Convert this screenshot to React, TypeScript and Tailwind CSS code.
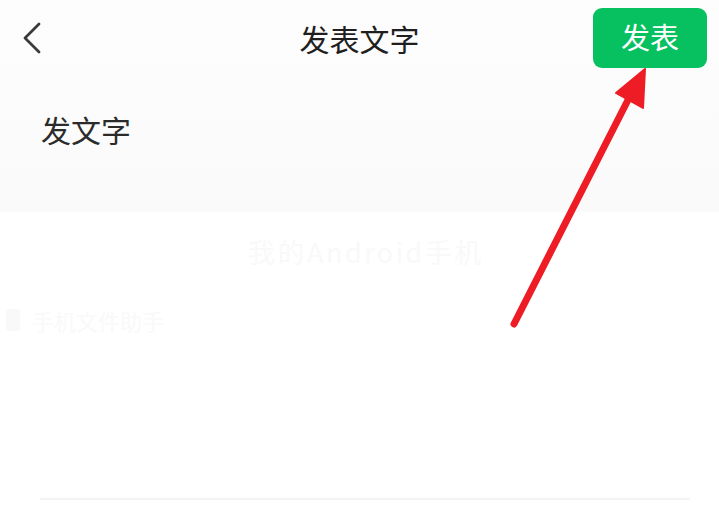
const FONT = { fontFamily: '"Noto Sans CJK SC", "Noto Sans", sans-serif' };

const App: React.FC = () => {
  return (
    <div className="relative w-[719px] h-[523px] overflow-hidden bg-white" style={FONT}>
      {/* top area */}
      <div className="h-[212px] bg-gradient-to-b from-[#fdfdfd] to-[#fafafa]">
        <div className="flex items-center h-[75px] pl-[22px] pr-[12px]">
          <svg width="20" height="32" viewBox="0 0 20 32" className="shrink-0">
            <path d="M17 2 L3 16 L17 30" fill="none" stroke="#3a3a3a" strokeWidth="2.8" strokeLinecap="round" strokeLinejoin="round" />
          </svg>
          <div className="flex-1 text-center text-[30px] leading-none text-[#1f1f1f] pl-[84px]">发表文字</div>
          <button className="w-[114px] h-[60px] rounded-[9px] bg-[#07c160] text-white text-[29px] leading-none pb-[3px]">
            发表
          </button>
        </div>
        <div className="pl-[41px] pt-[39px] text-[30px] leading-none text-[#2b2b2b]">发文字</div>
      </div>

      {/* faint watermark text */}
      <div className="pt-[26px] pl-[248px] text-[27px] leading-none tracking-[2.5px] text-[#f9f9f9]">我的Android手机</div>
      <div className="flex items-center gap-[12px] pt-[44px] pl-[6px] text-[22px] leading-none text-[#f9f9f9]">
        <span className="w-[14px] h-[22px] bg-[#f9f9f9] rounded-[2px]" />
        <span>手机文件助手</span>
      </div>

      {/* divider */}
      <div className="ml-[40px] mr-[29px] mt-[167px] h-[2px] bg-[#f3f3f3]" />

      {/* red annotation arrow */}
      <svg className="absolute inset-0 pointer-events-none" width="719" height="523" viewBox="0 0 719 523">
        <line x1="514" y1="324" x2="630" y2="96" stroke="#ee1c25" strokeWidth="7" strokeLinecap="round" />
        <polygon points="645,69 643,108 616,93" fill="#ee1c25" stroke="#ee1c25" strokeWidth="2" strokeLinejoin="round" />
      </svg>
    </div>
  );
};

export default App;
